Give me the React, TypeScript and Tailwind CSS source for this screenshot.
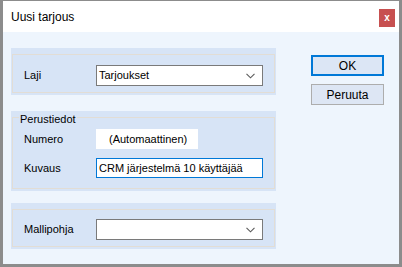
function Chevron() {
  return (
    <svg width="9" height="6" viewBox="0 0 9 6" className="shrink-0">
      <polyline points="0.5,0.8 4.5,4.8 8.5,0.8" fill="none" stroke="#5a5a5a" strokeWidth="1.1" />
    </svg>
  );
}

function Combo({ value }: { value: string }) {
  return (
    <div className="flex h-[21px] w-[167px] items-center justify-between border border-[#7a7a7a] bg-white pl-[2px] pr-[7px]">
      <span>{value}</span>
      <Chevron />
    </div>
  );
}

export default function App() {
  return (
    <div
      className="flex h-[267px] w-[402px] flex-col border-x-[3px] border-t border-b-[3px] border-[#8c8c8c] bg-white text-[11px] text-black"
      style={{ fontFamily: '"Liberation Sans", Arial, sans-serif' }}
    >
      <div className="flex h-[31px] shrink-0 items-center justify-between bg-white pl-[8px] pr-[4px]">
        <span className="text-[12px]">Uusi tarjous</span>
        <div className="mt-[3px] flex h-[18px] w-[16px] items-center justify-center bg-[#c75050] text-[10px] font-bold leading-none text-white">
          x
        </div>
      </div>

      <div className="flex flex-1 gap-[35px] bg-[#eef5fd] pl-[8px] pt-[16px]">
        <div className="flex w-[265px] flex-col">
          <div className="h-[47px] bg-[#d7e4f6] px-[1px] pb-[2px] pt-[6px]">
            <div className="flex h-full items-start border border-[#e2ddd5] pl-[11px] pt-[10px]">
              <span className="w-[72px] leading-[21px]">Laji</span>
              <Combo value="Tarjoukset" />
            </div>
          </div>

          <div className="mt-[16px] h-[80px] bg-[#d7e4f6] px-[1px] pb-[2px] pt-[6px]">
            <div className="relative flex h-full flex-col border border-[#e2ddd5] pl-[11px] pt-[11px]">
              <span className="absolute left-[6px] top-[-6px] bg-[#d7e4f6] px-[1px] leading-[14px]">Perustiedot</span>
              <div className="flex items-center">
                <span className="w-[72px]">Numero</span>
                <div className="flex h-[20px] w-[102px] items-center bg-white pl-[13px]">(Automaattinen)</div>
              </div>
              <div className="mt-[9px] flex items-center">
                <span className="w-[72px]">Kuvaus</span>
                <div className="flex h-[20px] w-[167px] items-center border border-[#0078d7] bg-white pl-[2px]">
                  CRM järjestelmä 10 käyttäjää
                </div>
              </div>
            </div>
          </div>

          <div className="mt-[12px] h-[46px] bg-[#d7e4f6] px-[1px] pb-[2px] pt-[6px]">
            <div className="flex h-full items-start border border-[#e2ddd5] pl-[11px] pt-[9px]">
              <span className="w-[72px] leading-[21px]">Mallipohja</span>
              <Combo value="" />
            </div>
          </div>
        </div>

        <div className="flex flex-col gap-[8px] pt-[7px]">
          <div className="flex h-[21px] w-[73px] items-center justify-center border-2 border-[#0078d7] bg-[#dce6f5] text-[12px]">
            OK
          </div>
          <div className="flex h-[21px] w-[73px] items-center justify-center border border-[#adadad] bg-[#dde6f4] text-[12px]">
            Peruuta
          </div>
        </div>
      </div>
    </div>
  );
}
